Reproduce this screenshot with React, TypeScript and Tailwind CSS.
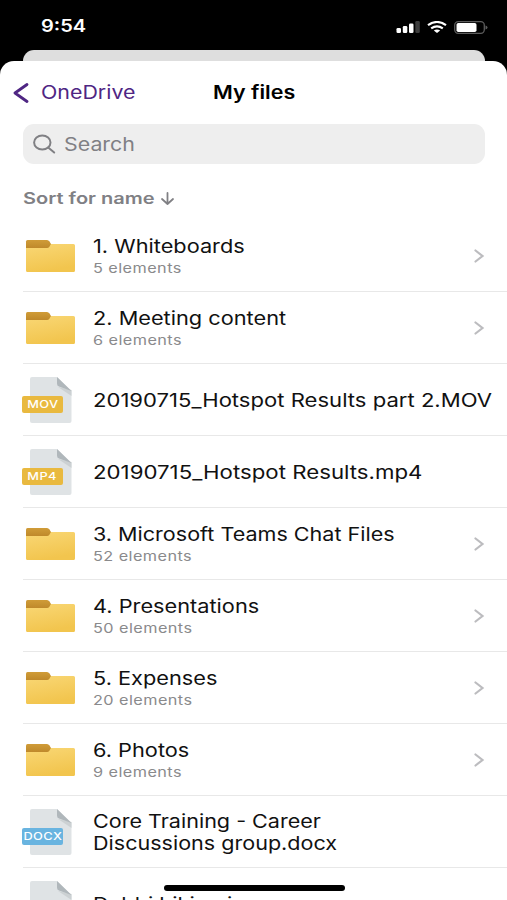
import { ReactNode } from "react"

type Entry = {
  name: string
  secondLine?: string
  count?: string
  badge?: string
  badgeColor?: string
  stretch?: string
}

const entries: Entry[] = [
  { name: "1. Whiteboards", count: "5 elements" },
  { name: "2. Meeting content", count: "6 elements" },
  { name: "20190715_Hotspot Results part 2.MOV", badge: "MOV", badgeColor: "bg-[#e9b93f]", stretch: "scale-x-[1.193]" },
  { name: "20190715_Hotspot Results.mp4", badge: "MP4", badgeColor: "bg-[#e9b93f]", stretch: "scale-x-[1.202]" },
  { name: "3. Microsoft Teams Chat Files", count: "52 elements", stretch: "scale-x-[1.165]" },
  { name: "4. Presentations", count: "50 elements" },
  { name: "5. Expenses", count: "20 elements" },
  { name: "6. Photos", count: "9 elements" },
  {
    name: "Core Training - Career",
    secondLine: "Discussions group.docx",
    badge: "DOCX",
    badgeColor: "bg-[#69b4e0]",
    stretch: "scale-x-[1.165]",
  },
  { name: "Debbi hiking in", badge: "DOCX", badgeColor: "bg-[#69b4e0]" },
]

// Wide lettering: Inter stretched horizontally from its left edge
function Wide({
  stretch = "scale-x-[1.175]",
  className = "",
  children,
}: {
  stretch?: string
  className?: string
  children: ReactNode
}) {
  return <span className={`block w-max origin-left whitespace-nowrap ${stretch} ${className}`}>{children}</span>
}

function FolderIcon() {
  return (
    <svg width="50" height="34" viewBox="0 0 50 34" className="ml-0.5">
      <defs>
        <linearGradient id="folder" x1="0" y1="0" x2="0.3" y2="1">
          <stop offset="0" stopColor="#f9d775" />
          <stop offset="1" stopColor="#f2c54e" />
        </linearGradient>
        <linearGradient id="tab" x1="0" y1="0" x2="0" y2="1">
          <stop offset="0" stopColor="#d09c38" />
          <stop offset="1" stopColor="#bf892b" />
        </linearGradient>
      </defs>
      <path d="M1 5h47.500a1.500 1.500 0 0 1 1.500 1.500v25a1.500 1.500 0 0 1-1.500 1.500h-46A1.500 1.500 0 0 1 1 31.500z" fill="url(#folder)" />
      <path d="M2.500 1h19.500q1.500 0 2.500 1.500l1.500 2.500-1.500 2.500q-1 1.500-2.500 1.500H1V2.500Q1 1 2.500 1z" fill="url(#tab)" />
    </svg>
  )
}

function FileIcon({ badge, badgeColor }: { badge?: string; badgeColor?: string }) {
  return (
    <div className="relative h-[46px] w-[50px]">
      <svg width="50" height="46" viewBox="0 0 50 46">
        <path d="M9 0H34l14.500 14v30a2 2 0 0 1-2 2H9a2 2 0 0 1-2-2V2a2 2 0 0 1 2-2z" fill="#dfe3e5" />
        <path d="M35 10l13.500 9v-6z" fill="#ccd1d3" />
        <path d="M34 0l14.500 14L36 9.500a3 3 0 0 1-2-3z" fill="#b0b7bb" />
      </svg>
      <div className={`absolute top-[19px] -left-px flex h-[17px] w-[41px] items-center justify-center rounded-[2px] pt-px ${badgeColor}`}>
        <span className="scale-x-[1.22] text-[10.500px] font-medium tracking-[0.3px] text-white">{badge}</span>
      </div>
    </div>
  )
}

function Row({ entry }: { entry: Entry }) {
  return (
    <li className="flex h-[72px] shrink-0 items-center border-b border-[#e8e8e8]">
      <div className="w-[70px] shrink-0">
        {entry.count ? <FolderIcon /> : <FileIcon badge={entry.badge} badgeColor={entry.badgeColor} />}
      </div>
      <div className="min-w-0 flex-1 pt-px text-[#111]">
        <Wide stretch={entry.stretch} className="text-[18.500px] leading-[22px]">
          {entry.name}
        </Wide>
        {entry.secondLine && (
          <Wide stretch={entry.stretch} className="text-[18.500px] leading-[22px]">
            {entry.secondLine}
          </Wide>
        )}
        {entry.count && (
          <Wide stretch="scale-x-[1.25]" className="pt-px text-[13px] leading-[20px] tracking-[0.35px] text-[#8a8a8c]">
            {entry.count}
          </Wide>
        )}
      </div>
      {entry.count && (
        <svg width="12" height="14" viewBox="0 0 12 14" className="mr-[22px]" fill="none" stroke="#bcbcbf" strokeWidth="2.200">
          <path d="M2.500 1.500l7 5.500-7 5.500" strokeLinecap="round" strokeLinejoin="miter" />
        </svg>
      )}
    </li>
  )
}

function StatusBar() {
  return (
    <div className="flex h-[50px] items-center justify-between pt-[4px] pr-[19px] pl-[41px] text-white">
      <Wide stretch="scale-x-[1.18]" className="text-[17px] font-semibold">
        9:54
      </Wide>
      <div className="flex items-center gap-[7px]">
        <svg width="24" height="12" viewBox="0 0 24 12" fill="#fff">
          <rect x="0.500" y="7" width="4.500" height="5" rx="1.300" />
          <rect x="6.800" y="5" width="4.500" height="7" rx="1.300" />
          <rect x="13" y="2.500" width="4.500" height="9.500" rx="1.300" />
          <rect x="19.300" y="0" width="4.500" height="12" rx="1.300" fill="#3d3d3d" />
        </svg>
        <svg width="20" height="12" viewBox="0 0 20 12" fill="none" stroke="#fff" strokeWidth="2.200">
          <path d="M1 4.200Q10-2.200 19 4.200M4.200 7.400q5.800-4 11.600 0" />
          <path d="M6.800 9.500q3.200-2 6.400 0L10 12z" fill="#fff" stroke="none" />
        </svg>
        <svg width="34" height="13" viewBox="0 0 34 13">
          <rect x="0.700" y="0.700" width="29.600" height="11.600" rx="3.500" fill="none" stroke="#5c5c5c" strokeWidth="1.300" />
          <rect x="2.500" y="2" width="20" height="9" rx="1.800" fill="#fff" />
          <path d="M31.500 4.500q2 .5 2 2t-2 2z" fill="#5c5c5c" />
        </svg>
      </div>
    </div>
  )
}

export default function App() {
  return (
    <div className="relative flex h-[900px] w-[507px] flex-col overflow-hidden bg-black font-['Inter',sans-serif]">
      <StatusBar />
      <div className="mr-[22px] ml-[23px] h-[11px] shrink-0 rounded-t-[11px] bg-[#dedede]" />
      <main className="flex min-h-0 flex-1 flex-col overflow-hidden rounded-t-[14px] bg-white">
        <header className="grid h-[63px] shrink-0 grid-cols-[213px_1fr] items-center">
          <div className="flex items-center pl-[13px] text-[#4f2683]">
            <svg width="16" height="20" viewBox="0 0 16 20" fill="none" stroke="currentColor" strokeWidth="2.800">
              <path d="M14 1.500L2 10l12 8.500" strokeLinecap="round" strokeLinejoin="round" />
            </svg>
            <Wide stretch="scale-x-[1.155]" className="ml-3 text-[18.500px]">
              OneDrive
            </Wide>
          </div>
          <Wide stretch="scale-x-[1.16]" className="text-[18.500px] font-semibold text-black">
            My files
          </Wide>
        </header>
        <div className="mr-[22px] ml-[23px] flex h-[40px] shrink-0 items-center rounded-[11px] bg-[#eeeeee] pl-[10px] text-[#808084]">
          <svg width="23" height="20" viewBox="0 0 23 20" fill="none" stroke="currentColor" strokeWidth="2">
            <ellipse cx="9.300" cy="8.500" rx="8.200" ry="7" />
            <path d="M15.200 13.500l6 5" strokeLinecap="round" />
          </svg>
          <Wide stretch="scale-x-[1.155]" className="ml-2 pt-px text-[18.500px]">
            Search
          </Wide>
        </div>
        <div className="flex h-[56px] shrink-0 items-center pt-[12px] pl-[23px] text-[#808084]">
          <div className="w-[138px]">
            <Wide stretch="scale-x-[1.25]" className="text-[16px] font-semibold">
              Sort for name
            </Wide>
          </div>
          <svg width="13" height="13" viewBox="0 0 13 13" fill="none" stroke="currentColor" strokeWidth="1.800">
            <path d="M6.500 1v11M1 7l5.500 5L12 7" strokeLinecap="round" strokeLinejoin="round" />
          </svg>
        </div>
        <ul className="ml-[23px] flex flex-col">
          {entries.map((entry) => (
            <Row key={entry.name} entry={entry} />
          ))}
        </ul>
      </main>
      <div className="absolute bottom-[9px] left-[164px] h-[6px] w-[181px] rounded-full bg-black" />
    </div>
  )
}
